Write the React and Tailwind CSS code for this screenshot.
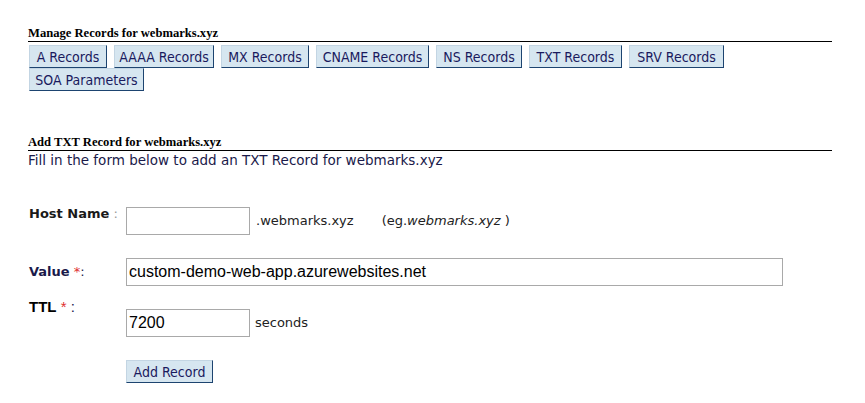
import React from 'react';

const tabs = [
  { label: 'A Records', w: 'w-[78px]' },
  { label: 'AAAA Records', w: 'w-[100px]' },
  { label: 'MX Records', w: 'w-[88px]' },
  { label: 'CNAME Records', w: 'w-[113px]' },
  { label: 'NS Records', w: 'w-[86px]' },
  { label: 'TXT Records', w: 'w-[93px]' },
  { label: 'SRV Records', w: 'w-[95px]' },
  { label: 'SOA Parameters', w: 'w-[115px]' },
];

const btn =
  "h-[23px] bg-[#d6e6f0] border border-t-[#c3d5e3] border-l-[#c3d5e3] border-r-[#1d4470] border-b-[#1d4470] text-[14px] leading-none text-[#1a1a5e] font-['DejaVu_Sans_Condensed','DejaVu_Sans',sans-serif] flex items-center justify-center";

function App() {
  return (
    <div className="min-h-screen bg-white pl-[28px] pt-[26px] w-[832px] font-['DejaVu_Sans',Verdana,sans-serif]">
      <h2 className="font-['Liberation_Serif',serif] font-bold text-[12.6px] leading-[14px] text-black border-b border-black pb-[1px]">
        Manage Records for webmarks.xyz
      </h2>
      <div className="flex flex-wrap gap-x-[7px] pl-px mt-[3px]">
        {tabs.map((t) => (
          <button key={t.label} className={`${btn} ${t.w}`}>
            {t.label}
          </button>
        ))}
      </div>

      <h2 className="mt-[44px] font-['Liberation_Serif',serif] font-bold text-[12.6px] leading-[14px] text-black border-b border-black pb-px">
        Add TXT Record for webmarks.xyz
      </h2>
      <p className="text-[13.5px] leading-[17px] text-[#1a1a4a] pt-px">
        Fill in the form below to add an TXT Record for webmarks.xyz
      </p>

      <div className="mt-[38px] flex items-start">
        <div className="w-[98px] pl-px text-[13px] leading-[16px] -mt-[1px]">
          <span className="font-bold text-[#1a1a1a]">Host Name</span>
          <span className="text-[#999]"> :</span>
        </div>
        <div className="flex items-center">
          <input
            className="w-[124px] h-[28px] border border-[#a9a9a9] bg-white px-[2px] text-[16px] font-['Liberation_Sans',Arial,sans-serif] outline-none"
            defaultValue=""
          />
          <span className="ml-[6px] text-[13px] text-[#222]">.webmarks.xyz</span>
          <span className="ml-[28px] text-[13px] text-[#222]">
            (eg.<i>webmarks.xyz</i> )
          </span>
        </div>
      </div>

      <div className="mt-[23px] flex items-center">
        <div className="w-[98px] pl-px text-[13px] leading-[16px]">
          <span className="font-bold text-[#1a1a4a]">Value</span>
          <span className="text-[#e03030]"> *</span>
          <span className="text-[#1a1a4a]">:</span>
        </div>
        <input
          className="w-[657px] h-[28px] border border-[#a9a9a9] bg-white px-[2px] text-[16px] text-black font-['Liberation_Sans',Arial,sans-serif] outline-none"
          defaultValue="custom-demo-web-app.azurewebsites.net"
        />
      </div>

      <div className="mt-[12px] flex items-start">
        <div className="w-[98px] pl-px text-[15px] leading-[17px] font-['Liberation_Sans',Arial,sans-serif]">
          <span className="font-bold text-black">TTL</span>
          <span className="text-[#e03030]"> * </span>
          <span className="text-[#1a1a4a]">:</span>
        </div>
        <div className="pt-[11px] flex items-center">
          <input
            className="w-[124px] h-[28px] border border-[#a9a9a9] bg-white px-[2px] text-[16px] text-black font-['Liberation_Sans',Arial,sans-serif] outline-none"
            defaultValue="7200"
          />
          <span className="ml-[5px] text-[13px] text-[#222]">seconds</span>
        </div>
      </div>

      <div className="mt-[23px] pl-[98px]">
        <button className={`${btn} w-[87px]`}>Add Record</button>
      </div>
    </div>
  );
}

export default App;
